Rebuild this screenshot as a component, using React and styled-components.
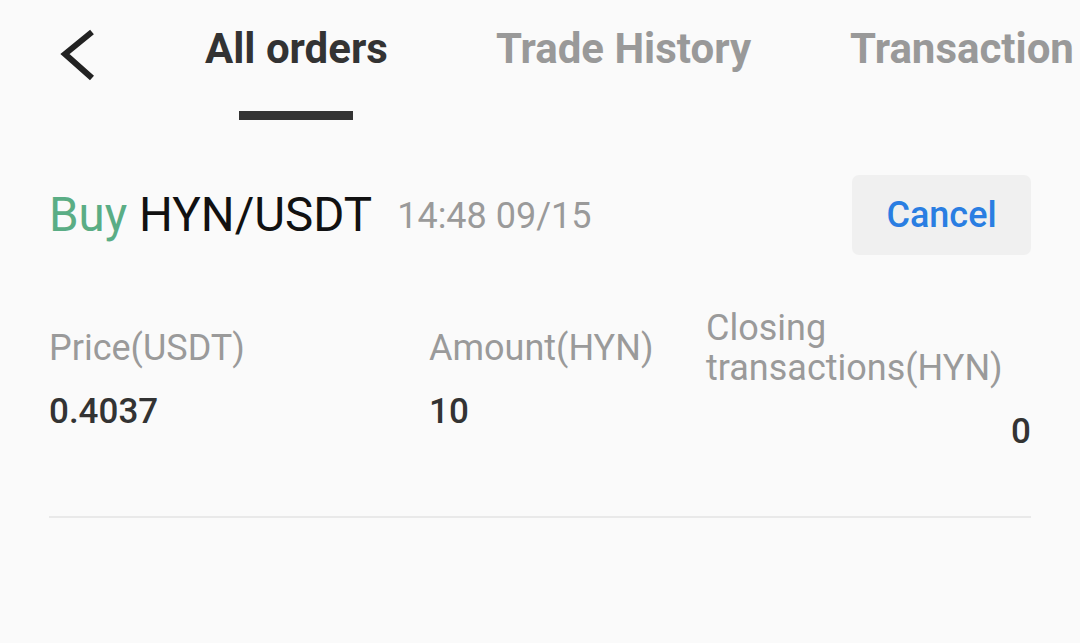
import React from 'react';
import styled, { createGlobalStyle } from 'styled-components';

const GlobalStyle = createGlobalStyle`
  html, body {
    margin: 0;
    padding: 0;
    background: #fafafa;
  }
  body {
    font-family: Roboto, "Noto Sans", sans-serif;
    overflow: hidden;
  }
`;

const Page = styled.div`
  width: 1080px;
  height: 643px;
  background: #fafafa;
  overflow: hidden;
`;

const Header = styled.div`
  display: flex;
  align-items: flex-start;
  padding-top: 24px;
  white-space: nowrap;
`;

const BackButton = styled.button`
  border: 0;
  background: none;
  padding: 0;
  margin: -2px 0 0 60px;
  width: 40px;
  height: 60px;
  cursor: pointer;
  svg {
    display: block;
  }
`;

const Tabs = styled.div`
  display: flex;
  gap: 99px;
  margin-left: 105px;
`;

const Tab = styled.div`
  display: flex;
  flex-direction: column;
  align-items: center;
  margin-left: ${p => p.offset || 0}px;
  font-size: 42px;
  line-height: 49px;
  font-weight: 700;
  color: ${p => (p.active ? '#333333' : '#999999')};
`;

const Indicator = styled.div`
  width: 114px;
  height: 9px;
  margin-top: 38px;
  background: #333333;
`;

const Order = styled.div`
  padding: 55px 49px 0 49px;
`;

const TitleRow = styled.div`
  display: flex;
  align-items: center;
  justify-content: space-between;
`;

const Title = styled.div`
  display: flex;
  align-items: baseline;
  gap: 25px;
`;

const Pair = styled.span`
  font-size: 47.5px;
  color: #111111;
`;

const Side = styled.span`
  color: #5aad85;
`;

const Time = styled.span`
  font-size: 36px;
  color: #9a9a9a;
  position: relative;
  top: -3px;
`;

const CancelButton = styled.button`
  width: 179px;
  height: 80px;
  border: 0;
  border-radius: 7px;
  background: #f0f0f0;
  color: #2a7ee2;
  font-family: Roboto, sans-serif;
  font-size: 36px;
  font-weight: 500;
  cursor: pointer;
`;

const InfoRow = styled.div`
  display: grid;
  grid-template-columns: 380px 277px 1fr;
  align-items: center;
  margin-top: 53px;
`;

const Cell = styled.div`
  display: flex;
  flex-direction: column;
  align-items: ${p => (p.right ? 'stretch' : 'flex-start')};
`;

const Label = styled.div`
  font-size: 36px;
  line-height: 40px;
  color: #9a9a9a;
`;

const Value = styled.div`
  margin-top: 24px;
  font-size: 35px;
  line-height: 40px;
  font-weight: 500;
  color: #333333;
  text-align: ${p => (p.right ? 'right' : 'left')};
`;

const Divider = styled.div`
  height: 2px;
  margin-top: 64px;
  background: #e9e9e9;
`;

const tabs = [
  { label: 'All orders', offset: 0 },
  { label: 'Trade History', offset: 9 },
  { label: 'Transaction', offset: 0 },
];

export default function App() {
  return (
    <Page>
      <GlobalStyle />
      <Header>
        <BackButton aria-label="back">
          <svg width="40" height="60" viewBox="0 0 40 60">
            <path d="M32 10 L5 32 L32 56" fill="none" stroke="#222" strokeWidth="6" />
          </svg>
        </BackButton>
        <Tabs>
          {tabs.map((t, i) => (
            <Tab key={t.label} active={i === 0} offset={t.offset}>
              {t.label}
              {i === 0 && <Indicator />}
            </Tab>
          ))}
        </Tabs>
      </Header>
      <Order>
        <TitleRow>
          <Title>
            <Pair>
              <Side>Buy</Side> HYN/USDT
            </Pair>
            <Time>14:48 09/15</Time>
          </Title>
          <CancelButton>Cancel</CancelButton>
        </TitleRow>
        <InfoRow>
          <Cell>
            <Label>Price(USDT)</Label>
            <Value>0.4037</Value>
          </Cell>
          <Cell>
            <Label>Amount(HYN)</Label>
            <Value>10</Value>
          </Cell>
          <Cell right>
            <Label>Closing transactions(HYN)</Label>
            <Value right>0</Value>
          </Cell>
        </InfoRow>
        <Divider />
      </Order>
    </Page>
  );
}
